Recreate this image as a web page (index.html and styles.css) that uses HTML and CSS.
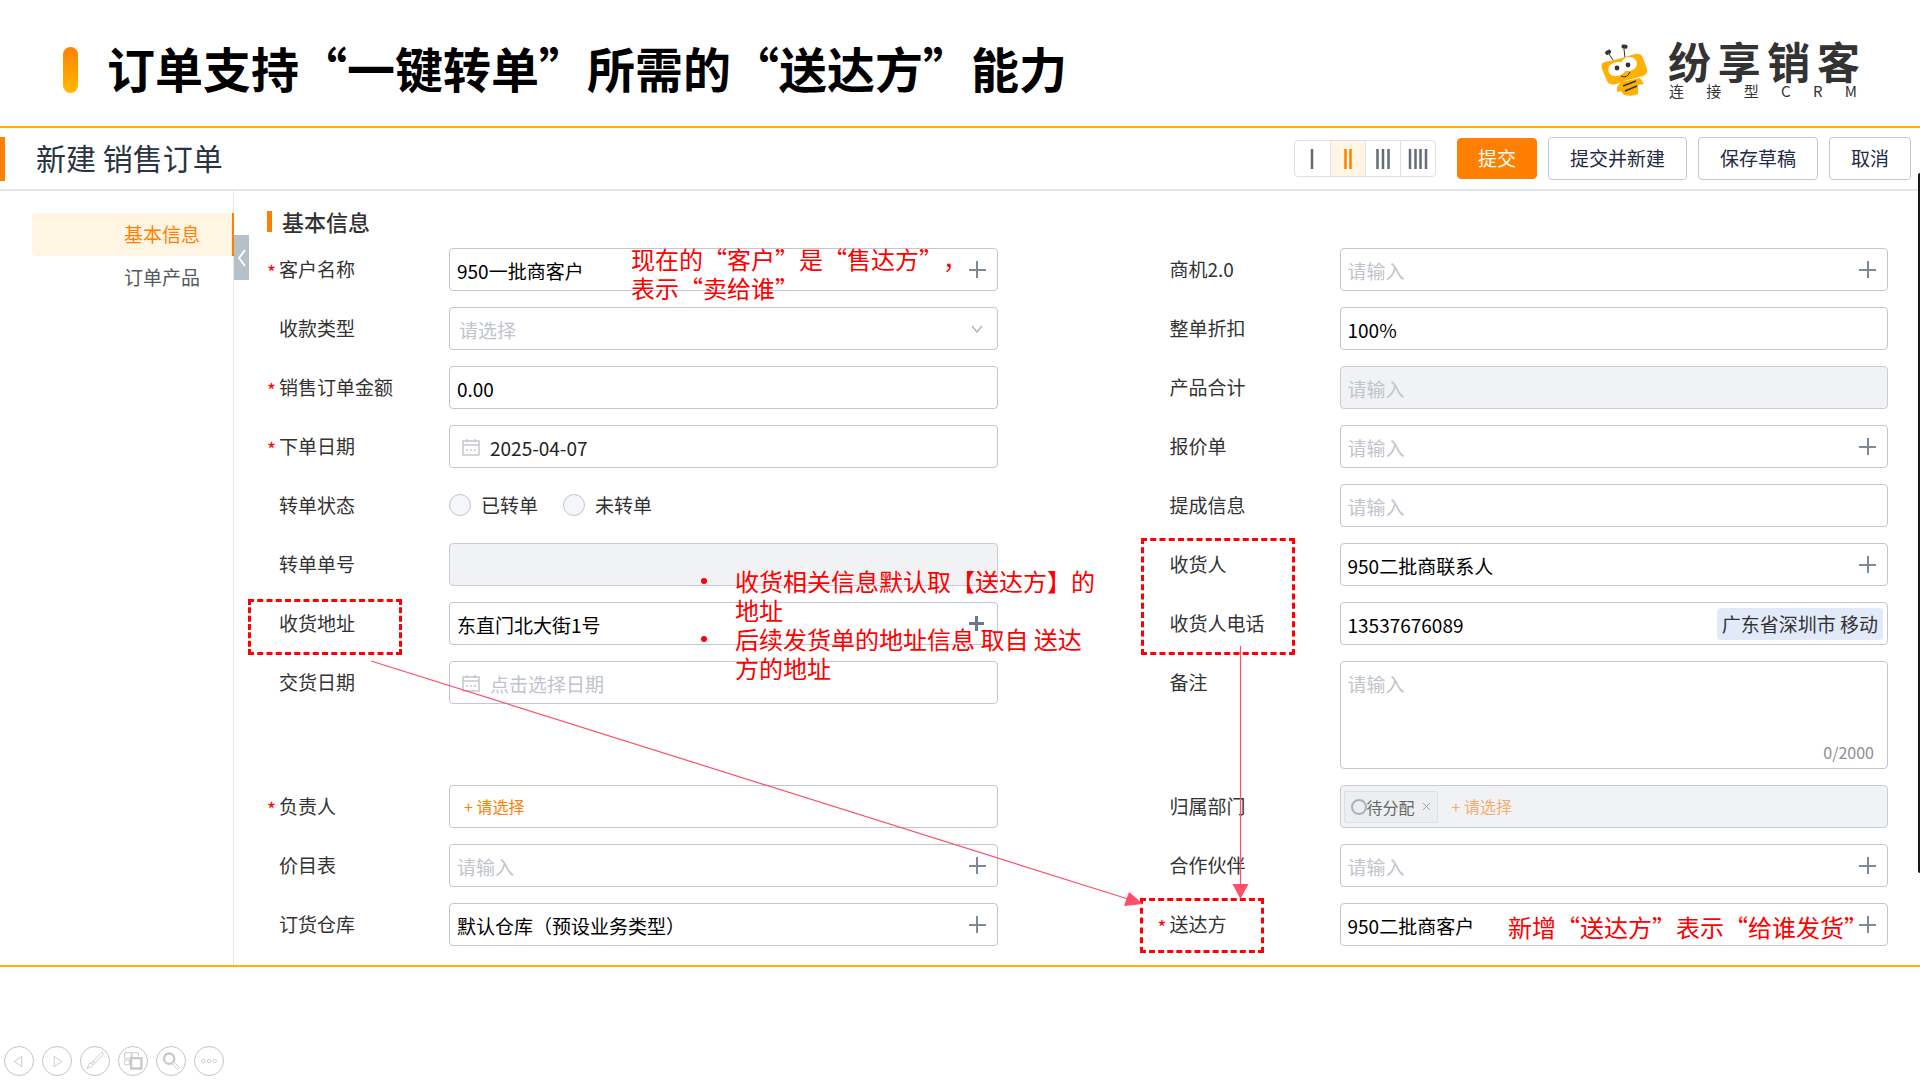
FILE: index.html
```
<!DOCTYPE html>
<html lang="zh-CN">
<head>
    <meta charset="UTF-8">
    <title>新建 销售订单</title>
    <link rel="stylesheet" href="styles.css">
</head>
<body>
    <header class="slide-header">
        <span class="title-mark"></span>
        <h1>订单支持“一键转单”所需的“送达方”能力</h1>
        <div class="brand">
            <svg class="bee" viewBox="0 0 60 62" width="60" height="62">
                <g stroke="#333" stroke-width="1">
                    <path d="M15 16l4 6M30 11l1 9" fill="none"/>
                    <rect x="12" y="13" width="5" height="3" rx="1" fill="#333" transform="rotate(-30 14 15)"/>
                    <rect x="28" y="7" width="5" height="3" rx="1" fill="#333" transform="rotate(5 30 9)"/>
                </g>
                <path d="M27 44l-4 5 0 5 4-1 3 4q8 2 14-1l0-9 6-1-4-6z" fill="#ffb000"/>
                <path d="M11 24Q26 21 41 16Q47 15 49 20L53 31Q54 36 49 38Q36 41 22 46Q16 48 13 43L8 31Q6 25 11 24z" fill="#ffb000"/>
                <ellipse cx="23" cy="31" rx="9" ry="7" fill="#fff" transform="rotate(-15 23 31)"/>
                <ellipse cx="35" cy="26" rx="8" ry="7" fill="#fff" transform="rotate(-15 35 26)"/>
                <circle cx="23" cy="30" r="2.400" fill="#333"/>
                <circle cx="34" cy="27" r="2.400" fill="#333"/>
                <path d="M27 38q6 3 9-4" fill="none" stroke="#333" stroke-width="1"/>
                <path d="M29 48l13-5M31 53l12-5" fill="none" stroke="#333" stroke-width="1.500"/>
            </svg>
            <div class="brand-text">
                <strong><span>纷</span><span>享</span><span>销</span><span>客</span></strong>
                <div class="brand-sub"><span>连</span><span>接</span><span>型</span><span>C</span><span>R</span><span>M</span></div>
            </div>
        </div>
    </header>

    <main class="panel">
        <div class="toolbar">
            <h2>新建 销售订单</h2>
            <div class="columns-switch">
                <button type="button" aria-label="一列"><svg width="22" height="20"><path d="M11 0v20"/></svg></button>
                <button type="button" class="active" aria-label="两列"><svg width="22" height="20"><path d="M8.500 0v20M13.500 0v20"/></svg></button>
                <button type="button" aria-label="三列"><svg width="22" height="20"><path d="M5.500 0v20M11 0v20M16.500 0v20"/></svg></button>
                <button type="button" aria-label="四列"><svg width="22" height="20"><path d="M3 0v20M8.500 0v20M13.500 0v20M19 0v20"/></svg></button>
            </div>
            <button type="button" class="btn primary">提交</button>
            <button type="button" class="btn">提交并新建</button>
            <button type="button" class="btn">保存草稿</button>
            <button type="button" class="btn">取消</button>
        </div>

        <div class="content">
            <nav class="sidebar">
                <a href="#basic" class="active">基本信息</a>
                <a href="#products">订单产品</a>
                <button type="button" class="collapse" aria-label="收起"><svg width="9" height="18"><path d="M8 1L2 9l6 8"/></svg></button>
            </nav>

            <form class="form" id="basic">
                <h3>基本信息</h3>
                <div class="grid">
                    <div class="field required">
                        <label for="customer">客户名称</label>
                        <div class="control"><input id="customer" value="950一批商客户"><span class="plus"></span></div>
                    </div>
                    <div class="field">
                        <label for="chance">商机2.0</label>
                        <div class="control"><input id="chance" placeholder="请输入"><span class="plus"></span></div>
                    </div>

                    <div class="field">
                        <label for="paytype">收款类型</label>
                        <div class="control">
                            <select id="paytype"><option>请选择</option></select>
                            <svg class="arrow" width="12" height="8"><path d="M1 1l5 6 5-6"/></svg>
                        </div>
                    </div>
                    <div class="field">
                        <label for="discount">整单折扣</label>
                        <div class="control"><input id="discount" value="100%"></div>
                    </div>

                    <div class="field required">
                        <label for="amount">销售订单金额</label>
                        <div class="control"><input id="amount" value="0.00"></div>
                    </div>
                    <div class="field">
                        <label for="total">产品合计</label>
                        <div class="control disabled"><input id="total" placeholder="请输入" disabled></div>
                    </div>

                    <div class="field required">
                        <label for="orderdate">下单日期</label>
                        <div class="control date">
                            <svg class="calendar" width="18" height="18"><path d="M1 3h16v14H1zM1 7h16M5 1v3M13 1v3M4 12h2M8 12h2M12 12h2"/></svg>
                            <input id="orderdate" value="2025-04-07">
                        </div>
                    </div>
                    <div class="field">
                        <label for="quote">报价单</label>
                        <div class="control"><input id="quote" placeholder="请输入"><span class="plus"></span></div>
                    </div>

                    <div class="field">
                        <span class="label">转单状态</span>
                        <div class="radios">
                            <label><input type="radio" name="state">已转单</label>
                            <label><input type="radio" name="state">未转单</label>
                        </div>
                    </div>
                    <div class="field">
                        <label for="commission">提成信息</label>
                        <div class="control"><input id="commission" placeholder="请输入"></div>
                    </div>

                    <div class="field">
                        <label for="transfer">转单单号</label>
                        <div class="control disabled"><input id="transfer" disabled></div>
                    </div>
                    <div class="field">
                        <label for="receiver">收货人</label>
                        <div class="control"><input id="receiver" value="950二批商联系人"><span class="plus"></span></div>
                    </div>

                    <div class="field">
                        <label for="address">收货地址</label>
                        <div class="control"><input id="address" value="东直门北大街1号"><span class="plus bold"></span></div>
                    </div>
                    <div class="field">
                        <label for="phone">收货人电话</label>
                        <div class="control"><input id="phone" value="13537676089"><span class="area">广东省深圳市 移动</span></div>
                    </div>

                    <div class="field">
                        <label for="delivery">交货日期</label>
                        <div class="control date">
                            <svg class="calendar" width="18" height="18"><path d="M1 3h16v14H1zM1 7h16M5 1v3M13 1v3M4 12h2M8 12h2M12 12h2"/></svg>
                            <input id="delivery" placeholder="点击选择日期">
                        </div>
                    </div>
                    <div class="field">
                        <label for="remark">备注</label>
                        <div class="control remark"><textarea id="remark" placeholder="请输入"></textarea><span class="count">0/2000</span></div>
                    </div>

                    <div class="field required">
                        <span class="label">负责人</span>
                        <div class="control"><button type="button" class="pick">+ 请选择</button></div>
                    </div>
                    <div class="field">
                        <span class="label">归属部门</span>
                        <div class="control disabled">
                            <span class="tag"><i></i>待分配<svg width="9" height="9"><path d="M1 1l7 7M8 1l-7 7"/></svg></span>
                            <button type="button" class="pick" disabled>+ 请选择</button>
                        </div>
                    </div>

                    <div class="field">
                        <label for="pricebook">价目表</label>
                        <div class="control"><input id="pricebook" placeholder="请输入"><span class="plus"></span></div>
                    </div>
                    <div class="field">
                        <label for="partner">合作伙伴</label>
                        <div class="control"><input id="partner" placeholder="请输入"><span class="plus"></span></div>
                    </div>

                    <div class="field">
                        <label for="warehouse">订货仓库</label>
                        <div class="control"><input id="warehouse" value="默认仓库（预设业务类型）"><span class="plus"></span></div>
                    </div>
                    <div class="field required">
                        <label for="shipto">送达方</label>
                        <div class="control"><input id="shipto" value="950二批商客户"><span class="plus"></span></div>
                    </div>
                </div>
            </form>
        </div>

        <!-- 批注层 -->
        <div class="notes">
            <div class="box box-address"></div>
            <div class="box box-receiver"></div>
            <div class="box box-shipto"></div>
            <svg class="lines" viewBox="0 0 1920 837">
                <path d="M371 533L1128 771M1240.500 518V757" fill="none" stroke="#ff4d6a" stroke-width="1.200"/>
                <path d="M1143 776l-14-12-5 14zM1240.500 771l-8-15h16z" fill="#ff4d6a"/>
            </svg>
            <p class="note note-customer">现在的“客户”是“售达方”，<br>表示“卖给谁”</p>
            <ul class="note note-address">
                <li>收货相关信息默认取【送达方】的地址</li>
                <li>后续发货单的地址信息 取自 送达方的地址</li>
            </ul>
            <p class="note note-shipto">新增“送达方”表示“给谁发货”</p>
        </div>
        <span class="scrollbar"></span>
    </main>

    <footer class="slide-controls">
        <button type="button" aria-label="上一页"><svg viewBox="0 0 30 30"><path d="M18 10v11l-8-5.500z"/></svg></button>
        <button type="button" aria-label="下一页"><svg viewBox="0 0 30 30"><path d="M12 10v11l8-5.500z"/></svg></button>
        <button type="button" aria-label="画笔"><svg viewBox="0 0 30 30"><path d="M22 6q3 0 1 3l-8 8-2-2zM13 15l2 2-2 2-2-2zM11 17l2 2q-2 3-7 4 2-2 2-4 1-2 3-2z"/></svg></button>
        <button type="button" aria-label="所有幻灯片"><svg viewBox="0 0 30 30"><path d="M6 6h7v6H6zM14 6h7v4M14 6v5M6 14h5v5H6z"/><path d="M13 12h11v11H13z" stroke-width="2.500"/></svg></button>
        <button type="button" aria-label="放大"><svg viewBox="0 0 30 30"><circle cx="13" cy="12.500" r="5.500" stroke-width="2.500"/><path d="M16 18l6 6 2-2-6-6"/></svg></button>
        <button type="button" aria-label="更多"><svg viewBox="0 0 30 30"><circle cx="9" cy="15" r="1.900"/><circle cx="15" cy="15" r="1.900"/><circle cx="21" cy="15" r="1.900"/></svg></button>
    </footer>
</body>
</html>
```
FILE: styles.css
```
* { box-sizing: border-box; }
body {
    margin: 0;
    min-height: 100vh;
    display: flex;
    flex-direction: column;
    background: #fff;
    color: #333;
    font-family: "Noto Sans CJK SC", sans-serif;
    font-size: 19px;
    line-height: 28px;
    text-spacing-trim: space-all;
}
h1, h2, h3, p, ul { margin: 0; padding: 0; }
button, input, select, textarea { font: inherit; color: inherit; margin: 0; padding: 0; border: 0; background: none; outline: 0; }
a { text-decoration: none; color: inherit; }
svg { flex: none; }

/* 标题栏 */
.slide-header { display: flex; align-items: center; height: 126px; padding: 0 60px 0 63px; }
.title-mark { width: 15px; height: 46px; margin: 14px 29px 0 0; border-radius: 8px; background: linear-gradient(#ff8000, #ffb900); }
.slide-header h1 { padding-top: 8px; font-size: 48px; line-height: 64px; font-weight: 700; color: #000; }
.brand { display: flex; align-items: center; margin-left: auto; padding-top: 12px; gap: 14px; }
.brand-text { width: 192px; color: #333; }
.brand-text strong { display: flex; justify-content: space-between; font-size: 43px; line-height: 44px; font-weight: 700; }
.brand-sub { display: flex; justify-content: space-between; padding: 0 3px 0 1px; font-size: 15px; line-height: 18px; }

/* 表单面板 */
.panel { position: relative; border-top: 2px solid #ffb400; border-bottom: 2px solid #ffb400; }
.toolbar { display: flex; align-items: center; gap: 11px; height: 63px; padding: 0 9px 0 0; border-bottom: 2px solid #e3e4e6; }
.toolbar h2 { display: flex; align-items: center; height: 44px; margin-right: auto; padding: 0 0 3px 31px; border-left: 5px solid #ff8000; font-size: 30px; font-weight: 400; color: #2a3443; }
.columns-switch { display: flex; margin-right: 10px; border: 1px solid #dde0e7; border-radius: 4px; overflow: hidden; }
.columns-switch button { display: flex; align-items: center; justify-content: center; width: 35px; height: 35px; border-left: 1px solid #dde0e7; stroke: #626b79; stroke-width: 2.5; }
.columns-switch button:first-child { border-left: 0; }
.columns-switch .active { background: #fff5e2; stroke: #ff8000; }
.btn { height: 43px; padding: 0 21px 2px; border: 1px solid #c3c7d0; border-radius: 4px; color: #1f2a48; white-space: nowrap; }
.btn.primary { height: 41px; padding: 0 20px 2px; border-color: #ff8000; background: #ff8000; color: #fff; }

.content { display: flex; }
.sidebar { position: relative; display: flex; flex-direction: column; width: 234px; padding: 22px 0 0 32px; border-right: 1px solid #e6e7ea; }
.sidebar a { height: 43px; padding-right: 33px; line-height: 42px; text-align: right; color: #545861; }
.sidebar .active { margin-right: -1px; padding-right: 32px; border-right: 2px solid #ff8000; border-radius: 4px 0 0 4px; background: #fff5e2; color: #ff8000; }
.collapse { position: absolute; left: 234px; top: 44px; width: 15px; height: 45px; padding-left: 3px; background: #b5c0c9; }
.collapse svg { display: block; fill: none; stroke: #fff; stroke-width: 2; }

.form { flex: 1; padding: 16px 32px 19px 33px; }
.form h3 { display: flex; align-items: center; height: 28px; margin-bottom: 13px; font-size: 22px; line-height: 26px; font-weight: 500; }
.form h3::before { content: ""; width: 5px; height: 21px; margin-right: 10px; background: #ff8000; }
.grid { display: grid; grid-template-columns: 1fr 1fr; gap: 16px 160px; }
.field { display: flex; align-items: flex-start; }
.field > label, .label { position: relative; width: 182px; padding-left: 12px; line-height: 42px; flex: none; }
.required > label::before, .required > .label::before { content: "*"; position: absolute; left: 0; top: 3px; color: #f00; font-size: 19px; }
.control { flex: 1; min-width: 0; display: flex; align-items: center; height: 43px; border: 1px solid #c1c6d0; border-radius: 4px; color: #000; }
.control input, .control select { flex: 1; min-width: 0; height: 41px; padding: 2px 7px 0; }
.control select { padding-left: 9px; appearance: none; color: #c0c4cc; }
.control ::placeholder { color: #c0c4cc; opacity: 1; }
.control.disabled { background: #f1f2f4; border-color: #c8ccd6; }
.plus { width: 17px; height: 17px; margin-right: 11px; background: linear-gradient(#7f8896, #7f8896) center / 17px 2px no-repeat, linear-gradient(#7f8896, #7f8896) center / 2px 17px no-repeat; }
.plus.bold { width: 15px; height: 15px; margin-right: 13px; background: linear-gradient(#6b7890, #6b7890) center / 15px 3px no-repeat, linear-gradient(#6b7890, #6b7890) center / 3px 15px no-repeat; }
.arrow { margin-right: 14px; fill: none; stroke: #b0b5bf; stroke-width: 1.5; }
.calendar { margin-left: 12px; fill: none; stroke: #c3c7ce; stroke-width: 1.5; }
.control.date input { padding-left: 10px; color: #222; }
.radios { display: flex; align-items: center; gap: 25px; height: 41px; }
.radios label { display: flex; align-items: center; }
.radios input { appearance: none; width: 22px; height: 22px; margin-right: 10px; border: 1px solid #c0c5d0; border-radius: 50%; background: #f4f6fb; }
.area { margin-right: 4px; padding: 0 5px; border-radius: 4px; background: #e2e9f9; color: #333; line-height: 32px; white-space: nowrap; }
.control.remark { position: relative; height: 108px; }
.remark textarea { width: 100%; height: 106px; padding: 8px 7px; resize: none; }
.count { position: absolute; right: 13px; bottom: 2px; color: #8c9098; font-size: 16px; }
.pick { padding: 0 0 2px 14px; color: #ff8000; font-size: 16px; }
.pick:disabled { color: #f6ad6b; }
.tag { display: flex; align-items: center; height: 32px; margin-left: 3px; padding: 0 6px; border: 1px solid #dcdfe8; border-radius: 2px; background: #edeef2; color: #666; font-size: 16px; }
.tag i { width: 16px; height: 16px; border: 2px solid #a9b3c0; border-radius: 50%; }
.tag svg { margin-left: 7px; stroke: #a2a8b3; }

/* 批注 */
.notes { position: absolute; inset: 0; pointer-events: none; }
.lines { position: absolute; left: 0; top: 0; width: 100%; }
.box { position: absolute; border: 3px dashed #f00; }
.box-address { left: 248px; top: 471px; width: 154px; height: 56px; }
.box-receiver { left: 1141px; top: 410px; width: 154px; height: 117px; }
.box-shipto { left: 1140px; top: 770px; width: 124px; height: 55px; }
.note { position: absolute; color: #f00; font-size: 24px; line-height: 29px; }
.note-customer { left: 631px; top: 116px; white-space: nowrap; }
.note-address { left: 699px; top: 438px; width: 400px; list-style: none; }
.note-address li { position: relative; padding-left: 36px; }
.note-address li::before { content: ""; position: absolute; left: 2px; top: 12px; width: 6px; height: 6px; border-radius: 50%; background: #f00; }
.note-shipto { left: 1508px; top: 784px; white-space: nowrap; }
.scrollbar { position: absolute; right: 0; top: 45px; width: 2px; height: 700px; border-radius: 2px 0 0 2px; background: #15171c; }

/* 放映控制 */
.slide-controls { display: flex; gap: 8px; margin-top: auto; padding: 0 0 4px 4px; }
.slide-controls button { width: 30px; height: 30px; border: 1px solid #c4c4c4; border-radius: 50%; }
.slide-controls svg { display: block; width: 28px; height: 28px; fill: none; stroke: #c8c8c8; }
```
